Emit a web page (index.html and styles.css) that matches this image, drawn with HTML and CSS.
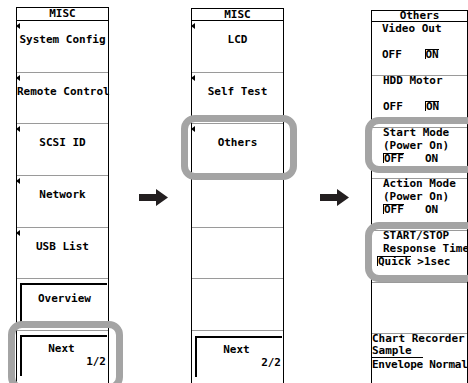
FILE: index.html
```html
<!DOCTYPE html>
<html>
<head>
<meta charset="utf-8">
<link rel="stylesheet" href="styles.css">
</head>
<body>
<div class="stage">
  <section class="panel p1">
    <div class="head">MISC</div>
    <div class="item"><i class="tri"></i><div class="label">System Config</div></div>
    <div class="item short"><i class="tri"></i><div class="label">Remote Control</div></div>
    <div class="item"><i class="tri"></i><div class="label">SCSI ID</div></div>
    <div class="item"><i class="tri"></i><div class="label">Network</div></div>
    <div class="item short"><i class="tri"></i><div class="label">USB List</div></div>
    <div class="item soft"><div class="bevel"><div class="label ov">Overview</div></div></div>
    <div class="item soft last"><div class="bevel"><div class="label nx">Next</div><div class="page">1/2</div></div></div>
    <div class="hl hl-next"></div>
  </section>

  <svg class="arrow a1" width="29" height="17" viewBox="0 0 29 17"><path d="M0 5H17V0L29 8.5L17 17V12H0Z" fill="#231f20"/></svg>

  <section class="panel p2">
    <div class="head h2">MISC</div>
    <div class="item"><i class="tri"></i><div class="label">LCD</div></div>
    <div class="item short"><i class="tri"></i><div class="label">Self Test</div></div>
    <div class="item"><i class="tri"></i><div class="label">Others</div></div>
    <div class="item"></div>
    <div class="item short"></div>
    <div class="item"></div>
    <div class="item soft last"><div class="bevel b2"><div class="label nx">Next</div><div class="page">2/2</div></div></div>
    <div class="hl hl-others"></div>
  </section>

  <svg class="arrow a2" width="29" height="17" viewBox="0 0 29 17"><path d="M0 5H17V0L29 8.5L17 17V12H0Z" fill="#231f20"/></svg>

  <section class="panel p3">
    <div class="head h3">Others</div>
    <div class="ritem r1">
      <div class="ln">Video Out</div>
      <div class="ln"></div>
      <div class="ln opts"><span class="opt">OFF</span><span class="opt"><span class="sel">ON</span></span></div>
    </div>
    <div class="ritem r2">
      <div class="ln">HDD Motor</div>
      <div class="ln"></div>
      <div class="ln opts"><span class="opt">OFF</span><span class="opt"><span class="sel">ON</span></span></div>
    </div>
    <div class="ritem r3">
      <div class="ln">Start Mode</div>
      <div class="ln">(Power On)</div>
      <div class="ln opts"><span class="opt"><span class="sel">OFF</span></span><span class="opt">ON</span></div>
    </div>
    <div class="ritem r4">
      <div class="ln">Action Mode</div>
      <div class="ln">(Power On)</div>
      <div class="ln opts"><span class="opt"><span class="sel">OFF</span></span><span class="opt">ON</span></div>
    </div>
    <div class="ritem r5">
      <div class="ln">START/STOP</div>
      <div class="ln">Response Time</div>
      <div class="ln opts quick"><span class="opt q"><span class="sel">Quick</span></span><span class="opt">&gt;1sec</span></div>
    </div>
    <div class="ritem r6"></div>
    <div class="ritem r7 chart">
      <div class="ln">Chart Recorder</div>
      <div class="ln sample">Sample</div>
      <div class="ln env">Envelope Normal</div>
    </div>
    <div class="hl hl-start"></div>
    <div class="hl hl-resp"></div>
  </section>
</div>
</body>
</html>
```
FILE: styles.css
```css
html, body {
  margin: 0;
  padding: 0;
}
body {
  width: 468px;
  height: 383px;
  overflow: hidden;
  background: #fff;
  color: #000;
  font-family: "DejaVu Sans Mono", "Liberation Mono", monospace;
  font-size: 11px;
  font-weight: bold;
}
.stage {
  display: flex;
  align-items: flex-start;
  padding-left: 16px;
  height: 383px;
  overflow: hidden;
}
.panel {
  position: relative;
  flex: none;
  box-sizing: border-box;
  width: 93px;
  height: 376px;
  border-left: 1px solid #000;
  border-right: 1px solid #000;
}
.p1 { margin-top: 7px; }
.p2 { margin-top: 8px; margin-left: 23px; }
.p3 { margin-top: 10px; margin-left: 22px; width: 97px; height: 373px; }

.arrow { flex: none; margin-top: 189px; display: block; }
.a1 { margin-left: 30px; }
.a2 { margin-left: 36px; }

.head {
  border-top: 1px solid #000;
  border-bottom: 1px solid #000;
  height: 12px;
  line-height: 12px;
  text-align: center;
  white-space: nowrap;
}
.h2 { height: 11px; line-height: 11px; }
.h3 { height: 10px; line-height: 10px; }

.item {
  box-sizing: border-box;
  height: 52px;
  border-bottom: 1px solid #9a9a9a;
  padding-top: 2px;
}
.item.short { height: 51px; }
.tri {
  display: block;
  width: 0;
  height: 0;
  margin-left: -1px;
  border-right: 4px solid #000;
  border-top: 3px solid transparent;
  border-bottom: 3px solid transparent;
}
.label {
  margin-top: 5px;
  line-height: 12px;
  text-align: center;
  white-space: nowrap;
}
.item.soft {
  padding: 4px 1px 0 3px;
}
.item.last { border-bottom: none; height: 45px; }
.bevel {
  box-sizing: border-box;
  height: 40px;
  border-top: 2px solid #000;
  border-left: 2px solid #000;
}
.soft.last .bevel { height: 41px; }
.bevel.b2 { margin-top: 1px; }
.label.ov { margin-top: 8px; }
.label.nx { margin-top: 6px; padding-right: 6px; }
.page {
  margin-top: 1px;
  line-height: 12px;
  text-align: right;
  padding-right: 1px;
}

.ritem {
  display: flow-root;
  box-sizing: border-box;
  height: 52px;
  border-bottom: 1px solid #9a9a9a;
  padding-left: 11px;
  white-space: nowrap;
}
.ritem .ln:first-child { margin-top: -2px; }
.r1 { height: 54px; padding-top: 2px; padding-left: 10px; }
.r3 { height: 51px; }
.r6 { height: 51px; }
.r7 { height: 40px; border-bottom: none; padding-left: 0; }
.ln {
  height: 13px;
  line-height: 13px;
}
.opts { display: flex; }
.opt { display: inline-block; width: 53px; }
.quick { margin-left: -6px; }
.opt.q { width: 43px; }
.sel {
  display: inline-block;
  line-height: 9px;
  border-top: 1px solid #000;
  border-left: 1px solid #000;
}
.sample {
  box-sizing: border-box;
  width: 52px;
  margin-left: -1px;
  padding-left: 1px;
  height: 13px;
  line-height: 12px;
  border-bottom: 1px solid #000;
}
.env { letter-spacing: -0.25px; }

.hl {
  position: absolute;
  box-sizing: border-box;
  border: 7px solid #a4a4a4;
  border-radius: 14px;
}
.hl-next { left: -9px; top: 314px; width: 115px; height: 70px; }
.hl-others { left: -11px; top: 107px; width: 116px; height: 65px; }
.hl-start { left: -7px; top: 107px; width: 115px; height: 56px; }
.hl-resp { left: -7px; top: 212px; width: 115px; height: 60px; }
```
